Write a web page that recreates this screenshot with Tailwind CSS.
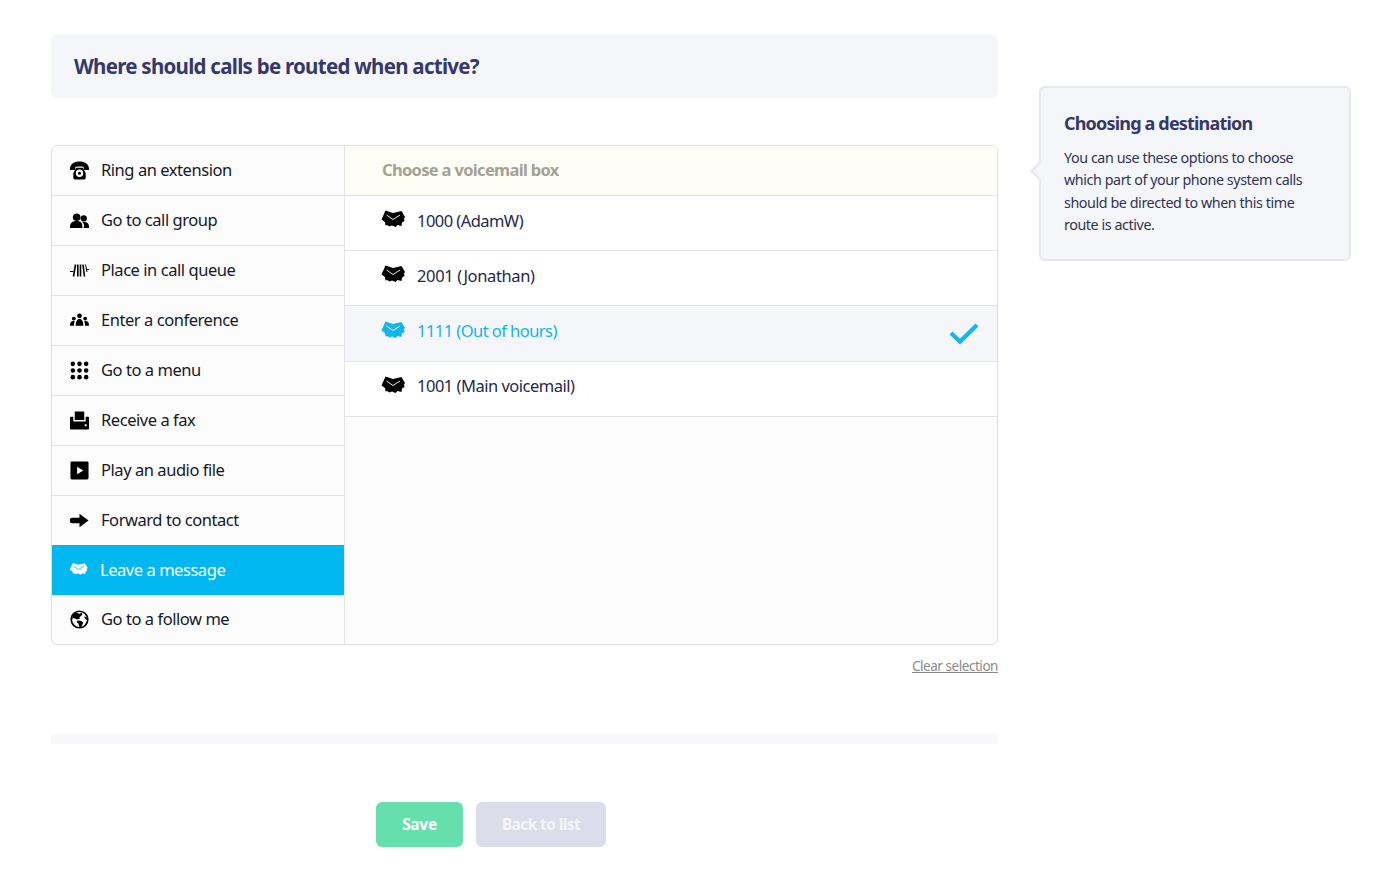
<!DOCTYPE html>
<html lang="en">
<head>
<meta charset="utf-8">
<title>Time route destination</title>
<script src="https://cdn.jsdelivr.net/npm/@tailwindcss/browser@4"></script>
</head>
<body class="bg-white font-['Noto_Sans','Lato',sans-serif] text-[#111827] overflow-hidden">
<div class="flex w-[1400px] h-[875px] pl-[51px]">
  <main class="w-[947px] pt-[34px] flex flex-col">
    <div class="h-[64px] bg-[#f5f6f9] rounded-md pl-[23px] pt-[1px] flex items-center">
      <h1 class="text-[20.500px] font-bold text-[#35396a] tracking-[-0.73px]">Where should calls be routed when active?</h1>
    </div>
    <div class="mt-[47px] h-[500px] flex border border-[#dfdfdf] rounded-md overflow-hidden bg-[#fcfcfc]">
      <ul class="w-[292px] shrink-0 flex flex-col text-[16.5px] tracking-[-0.45px] text-[#15182b]">
        <li class="h-[50px] flex items-center border-b border-[#e4e4e4] pl-[18px] gap-[12px]">
          <svg class="w-[19px] h-[19px]" viewBox="0 0 20 20" fill="#000"><path d="M0 8C0 3 5 .5 10 .5S20 3 20 8v1.500h-5.500V6.500c-1.500-.8-7.500-.8-9 0V9.500H0z"/><path fill-rule="evenodd" d="M6.500 7h7l3 5.500V18a1.500 1.500 0 0 1-1.500 1.500H5A1.500 1.500 0 0 1 3.500 18v-5.500zM10 9a3.900 3.900 0 1 0 0 7.800A3.900 3.900 0 0 0 10 9zM10 11.300a1.600 1.600 0 1 1 0 3.200 1.600 1.600 0 0 1 0-3.200z"/></svg>
          <span>Ring an extension</span></li>
        <li class="h-[50px] flex items-center border-b border-[#e4e4e4] pl-[18px] gap-[12px]">
          <svg class="w-[19px] h-[19px]" viewBox="0 0 20 20" fill="#000"><circle cx="7" cy="6.500" r="4"/><circle cx="14.500" cy="7.800" r="3.300"/><path d="M0 16.500c0-3.800 2.500-6 7-6s6 2.200 6 6v1.500H0z"/><path d="M14 18h6v-2c0-3-2-4.500-5-4.500-.8 0-1.500.1-2 .3 1 1 1.900 2.500 1.900 4.200z"/></svg>
          <span>Go to call group</span></li>
        <li class="h-[50px] flex items-center border-b border-[#e4e4e4] pl-[18px] gap-[12px]">
          <svg class="w-[19px] h-[19px]" viewBox="0 0 19 19" fill="none" stroke="#000"><path stroke-width="1.600" d="M5.500 3.500 3.500 15.500M7.800 3.500v12M10.500 3.500v12M13 3.500l1.500 12"/><path stroke-width="1" d="M0 10.500H3.500M15.500 3.500l1.500 7.500M16.500 8.500h2.500"/></svg>
          <span>Place in call queue</span></li>
        <li class="h-[50px] flex items-center border-b border-[#e4e4e4] pl-[18px] gap-[12px]">
          <svg class="w-[19px] h-[19px]" viewBox="0 0 20 20" fill="#000"><circle cx="10" cy="5" r="2.500"/><circle cx="4" cy="8" r="2"/><circle cx="16" cy="8" r="2"/><path d="M6 15.500c0-4.500 1.500-7 4-7s4 2.500 4 7z"/><path d="M0 15.500c0-3 1-5 3.500-5 .9 0 1.500.2 1.500.2-.5 1-.8 3-.8 4.800zM20 15.500c0-3-1-5-3.500-5-.9 0-1.500.2-1.500.2.500 1 .8 3 .8 4.800z"/></svg>
          <span>Enter a conference</span></li>
        <li class="h-[50px] flex items-center border-b border-[#e4e4e4] pl-[18px] gap-[12px]">
          <svg class="w-[19px] h-[19px]" viewBox="0 0 20 20" fill="#000"><circle cx="3" cy="3" r="2.400"/><circle cx="10" cy="3" r="2.400"/><circle cx="17" cy="3" r="2.400"/><circle cx="3" cy="10" r="2.400"/><circle cx="10" cy="10" r="2.400"/><circle cx="17" cy="10" r="2.400"/><circle cx="3" cy="17" r="2.400"/><circle cx="10" cy="17" r="2.400"/><circle cx="17" cy="17" r="2.400"/></svg>
          <span>Go to a menu</span></li>
        <li class="h-[50px] flex items-center border-b border-[#e4e4e4] pl-[18px] gap-[12px]">
          <svg class="w-[19px] h-[19px]" viewBox="0 0 20 20" fill="#000"><path d="M6 .500h8a1 1 0 0 1 1 1V9.500H5V1.500a1 1 0 0 1 1-1z"/><path fill-rule="evenodd" d="M1 6h2.500v5h13V6H19a1 1 0 0 1 1 1v11.500a1 1 0 0 1-1 1H1a1 1 0 0 1-1-1V7a1 1 0 0 1 1-1zM15.500 14h2v2h-2z"/></svg>
          <span>Receive a fax</span></li>
        <li class="h-[50px] flex items-center border-b border-[#e4e4e4] pl-[18px] gap-[12px]">
          <svg class="w-[19px] h-[19px]" viewBox="0 0 20 20" fill="#000"><path fill-rule="evenodd" d="M2 .500h16a1.500 1.500 0 0 1 1.500 1.500v16a1.500 1.500 0 0 1-1.500 1.500H2A1.500 1.500 0 0 1 .500 18V2A1.500 1.500 0 0 1 2 .500zM7.500 6v8l6.500-4z"/></svg>
          <span>Play an audio file</span></li>
        <li class="h-[49px] flex items-center pl-[18px] gap-[12px]">
          <svg class="w-[19px] h-[19px]" viewBox="0 0 20 20" fill="#000"><path d="M2.500 7.200H10V3l9.500 7L10 17v-4.200H2.500a2.800 2.800 0 0 1 0-5.600z"/></svg>
          <span>Forward to contact</span></li>
        <li class="h-[50px] flex items-center bg-[#00b8ef] text-white pl-[17px] gap-[12px]">
          <svg class="w-[19px] h-[16px]" viewBox="0 0 24 20" fill="#fff"><path d="M5 1 12 3.500 20 1.500l3.500 5.500-1 1.500.5 2-2 1.500-.5 3-3.500-1-2 2-3.500-1.500-2.500 1-2.500-1.500-1.500.5L4 11.500 1 9.500z"/><path fill="none" stroke="#00b8ef" stroke-width="1" d="M5.500 5 12 9.500 19 5"/></svg>
          <span>Leave a message</span></li>
        <li class="h-[49px] flex items-center pl-[18px] gap-[12px]">
          <svg class="w-[19px] h-[19px]" viewBox="0 0 20 20"><circle cx="10" cy="10" r="8.700" fill="#fff" stroke="#000" stroke-width="1.800"/><path d="M6 2.500l4 1.500 2.500-1 .5 2-3 2.500.5 1.500-3 1L4 8.500 2.500 10A8 8 0 0 1 6 2.500zM8 11l4 .5 2 2-2 4-2 1-1-4-2-2zM15 6.500l2.500 1 .5 3-2-1z"/></svg>
          <span>Go to a follow me</span></li>
      </ul>
      <section class="flex-1 flex flex-col border-l border-[#e4e4e4]">
        <div class="h-[50px] shrink-0 bg-[#fefef6] border-b border-[#e4e4e4] flex items-center pl-[37px] text-[16.5px] font-bold tracking-[-0.68px] text-[#a3a293]">Choose a voicemail box</div>
        <div class="bg-white">
          <div class="h-[55px] border-b border-[#e4e4e4] flex items-center pl-[36px] pb-[4px] gap-[12px] text-[16.5px] tracking-[-0.55px] text-[#25284d]">
            <svg class="w-[24px] h-[20px] -translate-y-[1px]" viewBox="0 0 24 20" fill="#000"><path d="M4.500 .5 12 3 20.500 1 24 7l-1 1.500.5 2.500-2.500 1.500-.5 3.500-4-1-2 2-3.500-1.500-2.500 1-2.500-1.500-1.500.5L4 12 .5 9.500z"/><path fill="none" stroke="#fff" stroke-width=".9" d="M5.500 5 12 9.500 19 5"/></svg>
            <span>1000 (AdamW)</span></div>
          <div class="h-[55px] border-b border-[#e4e4e4] flex items-center pl-[36px] pb-[4px] gap-[12px] text-[16.5px] tracking-[-0.35px] text-[#25284d]">
            <svg class="w-[24px] h-[20px] -translate-y-[1px]" viewBox="0 0 24 20" fill="#000"><path d="M4.500 .5 12 3 20.500 1 24 7l-1 1.500.5 2.500-2.500 1.500-.5 3.500-4-1-2 2-3.500-1.500-2.500 1-2.500-1.500-1.500.5L4 12 .5 9.500z"/><path fill="none" stroke="#fff" stroke-width=".9" d="M5.500 5 12 9.500 19 5"/></svg>
            <span>2001 (Jonathan)</span></div>
          <div class="h-[56px] border-b border-[#e4e4e4] bg-[#f5f6f9] flex items-center pl-[36px] pb-[4px] gap-[12px] pr-[18px] text-[16.5px] tracking-[-0.55px] text-[#13b5ea]">
            <svg class="w-[24px] h-[20px] -translate-y-[1px]" viewBox="0 0 24 20" fill="#13b5ea"><path d="M4.500 .5 12 3 20.500 1 24 7l-1 1.500.5 2.500-2.500 1.500-.5 3.500-4-1-2 2-3.500-1.500-2.500 1-2.500-1.500-1.500.5L4 12 .5 9.500z"/><path fill="none" stroke="#fff" stroke-width=".9" d="M5.500 5 12 9.500 19 5"/></svg>
            <span class="flex-1">1111 (Out of hours)</span>
            <svg class="w-[30px] h-[22px] translate-y-[2px]" viewBox="0 0 30 22" fill="none" stroke="#13b5ea" stroke-width="4.200" stroke-linecap="square"><path d="M3.500 11.500 11 18.500 26.500 3.500"/></svg>
          </div>
          <div class="h-[55px] border-b border-[#e4e4e4] flex items-center pl-[36px] pb-[6px] gap-[12px] text-[16.5px] tracking-[-0.5px] text-[#25284d]">
            <svg class="w-[24px] h-[20px]" viewBox="0 0 24 20" fill="#000"><path d="M4.500 .5 12 3 20.500 1 24 7l-1 1.500.5 2.500-2.500 1.500-.5 3.500-4-1-2 2-3.500-1.500-2.500 1-2.500-1.500-1.500.5L4 12 .5 9.500z"/><path fill="none" stroke="#fff" stroke-width=".9" d="M5.500 5 12 9.500 19 5"/></svg>
            <span>1001 (Main voicemail)</span></div>
        </div>
      </section>
    </div>
    <div class="mt-[13px] text-right text-[13.500px] tracking-[-0.45px] leading-[17px] text-[#8a8a8a] underline">Clear selection</div>
    <div class="mt-[59px] h-[10px] bg-[#f8f8fb]"></div>
    <div class="mt-[58px] flex gap-[13px] pl-[325px]">
      <button class="w-[87px] h-[45px] rounded-md bg-[#65dfac] text-white font-bold text-[15.500px] tracking-[-0.3px]">Save</button>
      <button class="w-[130px] h-[45px] rounded-md bg-[#dcddea] text-[#f5f5fa] font-bold text-[15.500px] tracking-[-0.6px]">Back to list</button>
    </div>
  </main>
  <aside class="relative ml-[41px] mt-[86px] w-[312px] h-[175px] bg-[#f5f6f9] border-2 border-[#e7e8ee] rounded-md pl-[23px] pt-[23px]">
    <span class="absolute -left-[8px] top-[76px] w-[14px] h-[14px] rotate-45 bg-[#f5f6f9] border-l-2 border-b-2 border-[#e7e8ee]"></span>
    <h2 class="text-[18px] font-bold text-[#35396a] leading-[24px] tracking-[-0.82px]">Choosing a destination</h2>
    <p class="mt-[12px] text-[14.300px] leading-[22.400px] tracking-[-0.42px] text-[#2f3357] w-[250px]">You can use these options to choose which part of your phone system calls should be directed to when this time route is active.</p>
  </aside>
</div>
</body>
</html>
